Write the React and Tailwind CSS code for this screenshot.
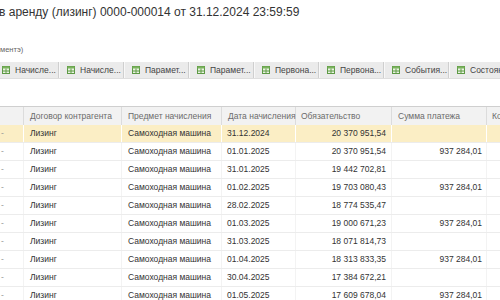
import React from "react";

const tabs = ["Начисле...", "Начисле...", "Парамет...", "Парамет...", "Первона...", "Первона...", "События...", "Состоян"];

const rows = [
  ["31.12.2024", "20 370 951,54", ""],
  ["01.01.2025", "20 370 951,54", "937 284,01"],
  ["31.01.2025", "19 442 702,81", ""],
  ["01.02.2025", "19 703 080,43", "937 284,01"],
  ["28.02.2025", "18 774 535,47", ""],
  ["01.03.2025", "19 000 671,23", "937 284,01"],
  ["31.03.2025", "18 071 814,73", ""],
  ["01.04.2025", "18 313 833,35", "937 284,01"],
  ["30.04.2025", "17 384 672,21", ""],
  ["01.05.2025", "17 609 678,04", "937 284,01"],
];

function TableIcon() {
  return (
    <svg width="8" height="8" viewBox="0 0 8 8" className="shrink-0">
      <rect x="0.5" y="0.5" width="7" height="7" fill="#eaf3e2" stroke="#5e9a45" />
      <rect x="0.5" y="0.5" width="7" height="2" fill="#7bb35e" />
      <line x1="0.5" y1="5" x2="7.5" y2="5" stroke="#5e9a45" />
      <line x1="4" y1="2.5" x2="4" y2="7.5" stroke="#5e9a45" />
    </svg>
  );
}

const cols = "grid grid-cols-[24px_98px_100px_74px_96px_95px_80px]";

export default function App() {
  return (
    <div className="w-[500px] h-[300px] overflow-hidden bg-white font-['Liberation_Sans',Arial,sans-serif] text-[#333]">
      <div className="h-[24px] leading-[24px] text-[12px] whitespace-nowrap text-[#333] -ml-[1px]">
        в аренду (лизинг) 0000-000014 от 31.12.2024 23:59:59
      </div>
      <div className="h-[21px]" />
      <div className="h-[10px] leading-[10px] text-[7.5px] text-[#666] whitespace-nowrap">ментэ)</div>
      <div className="h-[7px]" />
      <div className="h-[17px] flex bg-[#ebebeb] border-b border-[#dedede] -ml-[6px] whitespace-nowrap overflow-hidden">
        {tabs.map((t, i) => (
          <div
            key={i}
            className="w-[65px] shrink-0 flex items-center gap-[5px] pl-[8px] border-r border-[#cfcfcf] shadow-[inset_1px_0_0_#f8f8f8] text-[8.5px] text-[#444]"
          >
            <TableIcon />
            <span>{t}</span>
          </div>
        ))}
      </div>
      <div className="h-[27px]" />
      <div className={`${cols} h-[19px] bg-[#f2f2f2] border-t border-[#cfcfcf] text-[8.5px] text-[#6b6b6b] whitespace-nowrap`}>
        <div className="border-r border-[#dcdcdc]" />
        <div className="pl-[6px] flex items-center border-r border-[#dcdcdc]">Договор контрагента</div>
        <div className="pl-[6px] flex items-center border-r border-[#dcdcdc]">Предмет начисления</div>
        <div className="pl-[6px] flex items-center border-r border-[#dcdcdc]">Дата начисления</div>
        <div className="pl-[5px] flex items-center border-r border-[#dcdcdc]">Обязательство</div>
        <div className="pl-[6px] flex items-center border-r border-[#dcdcdc]">Сумма платежа</div>
        <div className="pl-[5px] flex items-center">Кол</div>
      </div>
      {rows.map((r, i) => {
        const sel = i === 0;
        const vb = sel ? "border-r border-white" : "border-r border-[#f3f3f3]";
        return (
          <div
            key={i}
            className={`${cols} h-[18px] border-b border-[#ececec] text-[8.5px] whitespace-nowrap ${sel ? "bg-[#fbeec5]" : "bg-white"}`}
          >
            <div className={`${vb} flex items-center pl-[1px] text-[#999]`}>-</div>
            <div className={`${vb} flex items-center pl-[6px]`}>Лизинг</div>
            <div className={`${vb} flex items-center pl-[6px]`}>Самоходная машина</div>
            <div className={`${vb} flex items-center pl-[5px]`}>{r[0]}</div>
            <div className={`${vb} flex items-center justify-end pr-[5px]`}>{r[1]}</div>
            <div className={`${vb} flex items-center justify-end pr-[4px]`}>{r[2]}</div>
            <div className="" />
          </div>
        );
      })}
    </div>
  );
}
